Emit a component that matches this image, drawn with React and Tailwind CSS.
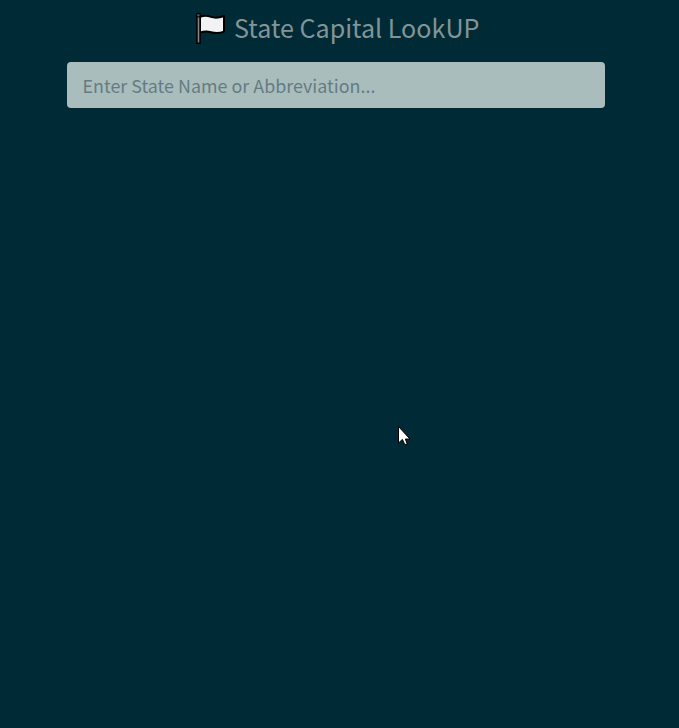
function FlagIcon() {
  return (
    <svg className="h-[32px] w-[32px] shrink-0" viewBox="0 0 32 32" fill="none">
      <path d="M3.500 4V32" stroke="#000" strokeWidth="4.600" />
      <circle cx="3.400" cy="3.300" r="2.500" fill="#000" />
      <path
        d="M5 5.200C8 3.600 12 3.500 16 4.900C20 6.200 25 5.500 29 4V19.600C24.500 21.500 20.500 21.500 16 20.200C12 19 8.500 19.300 5 20.700Z"
        fill="#f2f2f2"
        stroke="#000"
        strokeWidth="2"
        strokeLinejoin="round"
      />
      <path d="M3.500 5.500V30.500" stroke="#858585" strokeWidth="1.600" />
      <circle cx="3.400" cy="3.200" r="1.200" fill="#555" />
    </svg>
  );
}

function Pointer() {
  return (
    <svg className="absolute left-[398px] top-[426px] h-[20px] w-[13px]" viewBox="0 0 13 20">
      <path
        d="M.5.5V17L4.400 13.400L6.700 18.400H9.300L7.400 13H11.900L.5.5Z"
        fill="#fff"
        stroke="#000"
        strokeWidth="1"
      />
    </svg>
  );
}

export default function App() {
  return (
    <main className="relative h-screen overflow-hidden bg-[#002b36] px-[67px] font-['Noto_Sans_CJK_SC','Noto_Sans',sans-serif]">
      <header className="flex h-[62px] items-start pl-[128px] pt-[12px]">
        <FlagIcon />
        <h1 className="ml-[7px] whitespace-nowrap text-[25.1px] leading-[30px] text-[#839496]">
          State Capital LookUP
        </h1>
      </header>
      <input
        type="text"
        placeholder="Enter State Name or Abbreviation..."
        className="block h-[46px] w-[538px] rounded-[4px] bg-[#a9bdbd] pl-[15.5px] pr-4 text-[17.9px] text-[#586e75] outline-none placeholder:text-[#657b83]"
      />
      <Pointer />
    </main>
  );
}
